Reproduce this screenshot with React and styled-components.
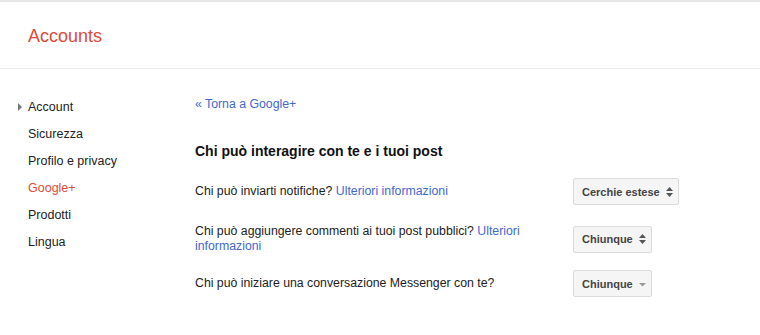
import styled, { createGlobalStyle } from 'styled-components';

const GlobalStyle = createGlobalStyle`
  body {
    margin: 0;
    background: #fff;
    font-family: "Liberation Sans", Arial, sans-serif;
    font-size: 12.3px;
    color: #222;
  }
`

const Header = styled.header`
  height: 66px;
  border-top: 2px solid #e8e8e8;
  border-bottom: 1px solid #ebebeb;
  display: flex;
  align-items: center;
  padding-left: 28px;

  & .title {
    margin: 0;
    font-size: 18px;
    font-weight: normal;
    color: #dd4b39;
    padding-top: 3px;
  }
`

const Layout = styled.div`
  display: flex;
  padding-top: 26px;
`

const Nav = styled.ul`
  list-style: none;
  margin: 0;
  padding: 0 0 0 28px;
  width: 167px;
`

const NavItem = styled.li`
  position: relative;
  height: 27px;
  line-height: 24px;
  font-size: 12.5px;
  color: ${p => (p.$active ? '#dd4b39' : '#222')};

  &::before {
    content: '';
    display: ${p => (p.$open ? 'block' : 'none')};
    position: absolute;
    left: -10px;
    top: 8px;
    border-left: 4px solid #777;
    border-top: 4px solid transparent;
    border-bottom: 4px solid transparent;
  }
`

const Main = styled.main`
  flex: 1;
`

const Link = styled.a`
  color: #4268d3;
  text-decoration: none;
  cursor: pointer;
`

const BackLink = styled(Link)`
  display: block;
  line-height: 18px;
`

const Section = styled.h2`
  margin: 28px 0 17px;
  font-size: 14px;
  font-weight: bold;
  color: #111;
  line-height: 20px;
`

const Row = styled.div`
  display: grid;
  grid-template-columns: 378px auto;
  align-items: center;
  height: 27px;
  margin-bottom: 19px;

  & .question {
    max-width: 335px;
    line-height: 15px;
  }
`

const Select = styled.button`
  justify-self: start;
  display: flex;
  align-items: center;
  gap: 6px;
  height: 27px;
  padding: 0 5px 0 8px;
  background: #f5f5f5;
  border: 1px solid #dcdcdc;
  border-radius: 2px;
  font-family: "Liberation Sans", Arial, sans-serif;
  font-size: 11px;
  font-weight: bold;
  color: #444;
  cursor: pointer;
`

const Arrows = ({ single }) => (
  single ? (
    <svg width="7" height="8" viewBox="0 0 7 8">
      <path d="M0 3h7L3.5 6.5z" fill="#999" />
    </svg>
  ) : (
    <svg width="7" height="10" viewBox="0 0 7 10">
      <path d="M0 4L3.5 0L7 4z M0 6h7L3.5 10z" fill="#555" />
    </svg>
  )
)

const navItems = [
  { label: 'Account', open: true },
  { label: 'Sicurezza' },
  { label: 'Profilo e privacy' },
  { label: 'Google+', active: true },
  { label: 'Prodotti' },
  { label: 'Lingua' },
]

const settings = [
  { q: 'Chi può inviarti notifiche?', more: true, value: 'Cerchie estese' },
  { q: 'Chi può aggiungere commenti ai tuoi post pubblici?', more: true, value: 'Chiunque' },
  { q: 'Chi può iniziare una conversazione Messenger con te?', value: 'Chiunque', single: true },
]

function App() {
  return (
    <>
      <GlobalStyle />
      <Header>
        <h1 className="title">Accounts</h1>
      </Header>
      <Layout>
        <Nav>
          {navItems.map(item => (
            <NavItem key={item.label} $open={item.open} $active={item.active}>
              {item.label}
            </NavItem>
          ))}
        </Nav>
        <Main>
          <BackLink>« Torna a Google+</BackLink>
          <Section>Chi può interagire con te e i tuoi post</Section>
          {settings.map(s => (
            <Row key={s.q}>
              <div className="question">
                {s.q}{s.more && <> <Link>Ulteriori informazioni</Link></>}
              </div>
              <Select>
                {s.value}
                <Arrows single={s.single} />
              </Select>
            </Row>
          ))}
        </Main>
      </Layout>
    </>
  );
}

export default App;
